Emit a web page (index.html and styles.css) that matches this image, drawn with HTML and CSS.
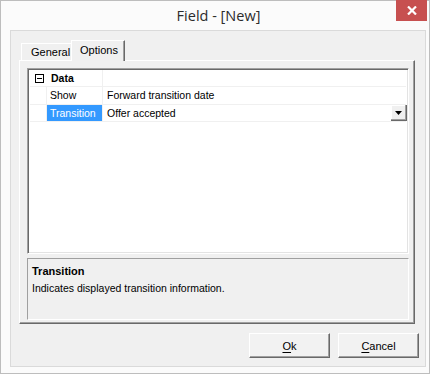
FILE: index.html
```html
<!DOCTYPE html>
<html>
<head>
<meta charset="utf-8">
<link rel="stylesheet" href="styles.css">
</head>
<body>
<div class="window">
  <div class="titlebar">
    <div class="title">Field - [New]</div>
    <div class="close">
      <svg width="10" height="9" viewBox="0 0 10 9"><path d="M1 0.5 L9 8.5 M9 0.5 L1 8.5" stroke="#fff" stroke-width="2.2"/></svg>
    </div>
  </div>
  <div class="client">
    <div class="tabs">
      <div class="tab">General</div>
      <div class="tab active">Options</div>
    </div>
    <div class="panel">
      <div class="grid">
        <div class="row cat">
          <div class="margin"><span class="box"></span></div>
          <div class="name">Data</div>
          <div class="value"></div>
        </div>
        <div class="row tall">
          <div class="margin line"></div>
          <div class="name">Show</div>
          <div class="value">Forward transition date</div>
        </div>
        <div class="row">
          <div class="margin line"></div>
          <div class="name sel">Transition</div>
          <div class="value">Offer accepted
            <span class="drop"><svg width="7" height="4" viewBox="0 0 7 4"><path d="M0 0 H7 L3.5 4 Z" fill="#000"/></svg></span>
          </div>
        </div>
      </div>
      <div class="help">
        <div class="help-title">Transition</div>
        <div class="help-text">Indicates displayed transition information.</div>
      </div>
    </div>
    <div class="buttons">
      <div class="btn"><u>O</u>k</div>
      <div class="btn"><u>C</u>ancel</div>
    </div>
  </div>
</div>
</body>
</html>
```
FILE: styles.css
```css
* { box-sizing: border-box; }
html, body { margin: 0; padding: 0; }
body {
  width: 430px;
  height: 375px;
  overflow: hidden;
  background: #ffffff;
  font-family: "Liberation Sans", Arial, sans-serif;
  font-size: 10.5px;
  color: #000;
}
.window {
  width: 430px;
  height: 374px;
  background: #fbfbfb;
  border: 1px solid #bdbdbd;
  display: flex;
  flex-direction: column;
}
.titlebar {
  height: 29px;
  display: flex;
  align-items: flex-start;
}
.title {
  flex: 1;
  padding-left: 40px;
  padding-top: 5px;
  text-align: center;
  font-family: "Open Sans", "Noto Sans", sans-serif;
  font-size: 14.5px;
  color: #2b2b2b;
}
.close {
  width: 31px;
  height: 21px;
  margin-right: 2px;
  margin-top: -1px;
  background: #c75050;
  display: flex;
  align-items: center;
  justify-content: center;
}
.client {
  flex: 1;
  margin: 0 3px 6px 9px;
  border: 1px solid #dadada;
  background: #f0f0f0;
  padding: 9px 8px 0 8px;
  display: flex;
  flex-direction: column;
}
.tabs {
  display: flex;
  align-items: flex-end;
  height: 20px;
  padding-left: 2px;
  font-size: 11px;
}
.tab {
  height: 17px;
  padding: 2px 0 0 9px;
  width: 50px;
  border-top: 1px solid #fff;
  border-left: 1px solid #fff;
}
.tab.active {
  position: relative;
  z-index: 1;
  width: 54px;
  height: 21px;
  margin-bottom: -1px;
  padding: 3px 0 0 8px;
  background: #f0f0f0;
  border-right: 1px solid #696969;
  box-shadow: inset -1px 0 0 #a0a0a0;
}
.panel {
  width: 396px;
  height: 264px;
  border-top: 1px solid #fff;
  border-left: 1px solid #fff;
  border-right: 1px solid #696969;
  border-bottom: 1px solid #696969;
  box-shadow: inset -1px -1px 0 #a0a0a0;
  padding: 7px 5px 3px 7px;
  display: flex;
  flex-direction: column;
  gap: 4px;
}
.grid {
  flex: 1;
  background: #fff;
  border-top: 1px solid #a0a0a0;
  border-left: 1px solid #a0a0a0;
  border-right: 1px solid #fff;
  border-bottom: 1px solid #fff;
  box-shadow: inset 1px 1px 0 #696969, inset -1px -1px 0 #e3e3e3;
  padding: 1px 2px 0 2px;
}
.row {
  display: grid;
  grid-template-columns: 17px 56px 1fr;
  height: 17px;
  border-bottom: 1px solid #f0f0f0;
  line-height: 16px;
}
.row.tall { height: 18px; line-height: 17px; }
.margin.line { border-right: 1px solid #f0f0f0; }
.cat .margin { display: flex; align-items: center; padding-left: 5px; }
.box {
  width: 9px;
  height: 9px;
  border: 1px solid #000;
  display: block;
  background: linear-gradient(#000, #000) center / 5px 1px no-repeat;
}
.cat .name { font-weight: bold; padding-left: 4px; }
.name {
  padding-left: 3px;
  border-right: 1px solid #f0f0f0;
}
.name.sel { background: #3399ff; color: #fff; }
.value {
  padding-left: 4px;
  display: flex;
  justify-content: space-between;
}
.drop {
  width: 16px;
  height: 16px;
  background: #f0f0f0;
  border-right: 1px solid #696969;
  border-bottom: 1px solid #696969;
  box-shadow: inset -1px -1px 0 #a0a0a0, inset 1px 1px 0 #fff;
  display: flex;
  align-items: center;
  justify-content: center;
  margin-right: -1px;
}
.help {
  height: 62px;
  border-top: 1px solid #a0a0a0;
  border-left: 1px solid #a0a0a0;
  border-right: 1px solid #fff;
  border-bottom: 1px solid #fff;
  padding: 4px 4px;
  line-height: 17px;
}
.help-title { font-weight: bold; font-size: 11px; }
.buttons {
  display: flex;
  justify-content: flex-end;
  gap: 8px;
  margin-top: 9px;
  margin-right: -2px;
}
.btn {
  width: 81px;
  height: 25px;
  background: #f2f2f2;
  border-top: 1px solid #fff;
  border-left: 1px solid #fff;
  border-right: 1px solid #696969;
  border-bottom: 1px solid #696969;
  box-shadow: inset -1px -1px 0 #a0a0a0;
  display: flex;
  align-items: center;
  justify-content: center;
  font-size: 11px;
}
.btn u { text-decoration-thickness: 1px; text-underline-offset: 2px; }
```
